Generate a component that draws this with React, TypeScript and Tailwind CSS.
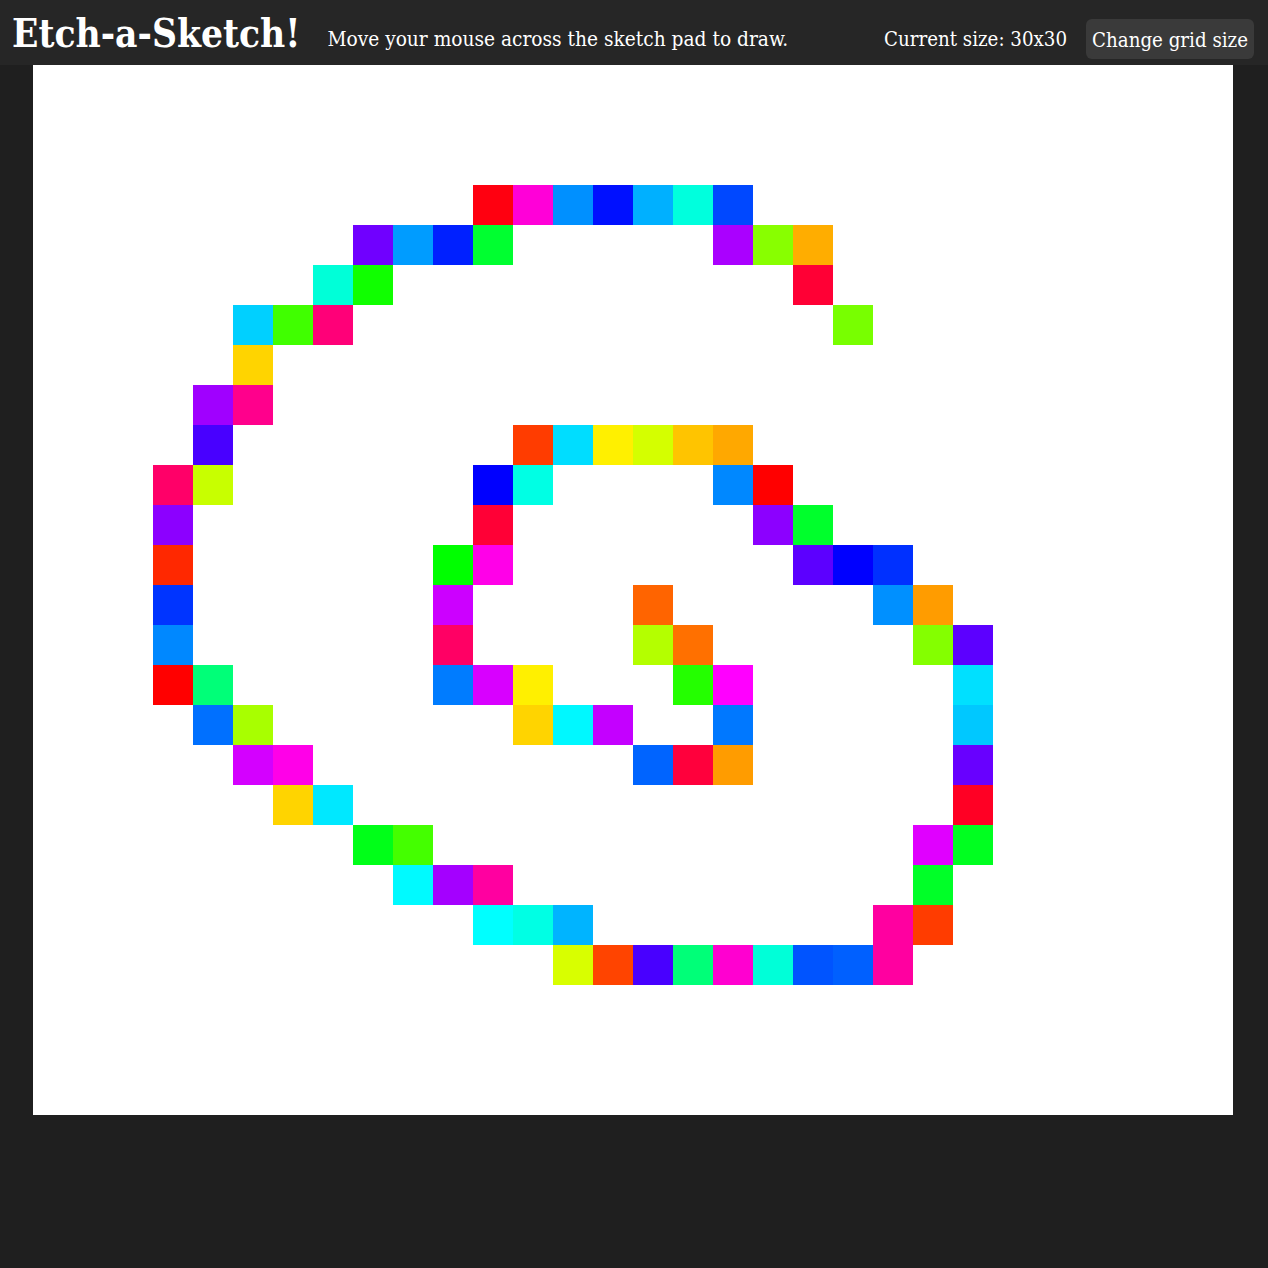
import React from "react";

// painted cells: row -> list of [col, colour]
const painted: Record<number, [number, string][]> = {
  3: [[11, "#ff0010"], [12, "#ff00d8"], [13, "#0090ff"], [14, "#0010ff"], [15, "#00b0ff"], [16, "#00ffdd"], [17, "#0048ff"]],
  4: [[8, "#7000ff"], [9, "#009cff"], [10, "#0020ff"], [11, "#00ff30"], [17, "#aa00ff"], [18, "#88ff00"], [19, "#ffad00"]],
  5: [[7, "#00ffd8"], [8, "#10ff00"], [19, "#ff0035"]],
  6: [[5, "#00d0ff"], [6, "#40ff00"], [7, "#ff0078"], [20, "#78ff00"]],
  7: [[5, "#ffd400"]],
  8: [[4, "#a000ff"], [5, "#ff008c"]],
  9: [[4, "#4800ff"], [12, "#ff3c00"], [13, "#00ddff"], [14, "#fff000"], [15, "#d4ff00"], [16, "#ffc400"], [17, "#ffa800"]],
  10: [[3, "#ff0068"], [4, "#c8ff00"], [11, "#0000ff"], [12, "#00ffe4"], [17, "#0088ff"], [18, "#ff0000"]],
  11: [[3, "#8c00ff"], [11, "#ff0036"], [18, "#8c00ff"], [19, "#00ff2c"]],
  12: [[3, "#ff2800"], [10, "#00ff00"], [11, "#ff00e8"], [19, "#5c00ff"], [20, "#0000ff"], [21, "#0030ff"]],
  13: [[3, "#0034ff"], [10, "#cc00ff"], [15, "#ff6400"], [21, "#0090ff"], [22, "#ff9c00"]],
  14: [[3, "#0088ff"], [10, "#ff0064"], [15, "#b4ff00"], [16, "#ff7000"], [22, "#84ff00"], [23, "#5c00ff"]],
  15: [[3, "#ff0000"], [4, "#00ff78"], [10, "#007cff"], [11, "#d800ff"], [12, "#fff000"], [16, "#24ff00"], [17, "#ff00ff"], [23, "#00e0ff"]],
  16: [[4, "#0070ff"], [5, "#a8ff00"], [12, "#ffd400"], [13, "#00f8ff"], [14, "#c400ff"], [17, "#0078ff"], [23, "#00c8ff"]],
  17: [[5, "#d400ff"], [6, "#ff00e8"], [15, "#0064ff"], [16, "#ff003c"], [17, "#ff9c00"], [23, "#6800ff"]],
  18: [[6, "#ffd400"], [7, "#00e8ff"], [23, "#ff0024"]],
  19: [[8, "#00ff18"], [9, "#44ff00"], [22, "#e000ff"], [23, "#00ff20"]],
  20: [[9, "#00faff"], [10, "#a400ff"], [11, "#ff00a0"], [22, "#00ff28"]],
  21: [[11, "#00ffff"], [12, "#00ffe4"], [13, "#00b4ff"], [21, "#ff00a0"], [22, "#ff3c00"]],
  22: [[13, "#d8ff00"], [14, "#ff4400"], [15, "#4800ff"], [16, "#00ff78"], [17, "#ff00d0"], [18, "#00ffd8"], [19, "#0054ff"], [20, "#0060ff"], [21, "#ff00a0"]],
};

const SIZE = 30;

function cellColor(row: number, col: number) {
  const hit = painted[row]?.find(([c]) => c === col);
  return hit ? hit[1] : undefined;
}

export default function App() {
  const cells = [];
  for (let r = 0; r < SIZE; r++) {
    for (let c = 0; c < SIZE; c++) {
      const color = cellColor(r, c);
      cells.push(
        <div
          key={`${r}-${c}`}
          className="h-10 w-10 bg-white"
          style={color ? { backgroundColor: color } : undefined}
        />
      );
    }
  }

  return (
    <div
      className="min-h-[1268px] bg-[#1f1f1f] font-stretch-condensed text-white"
      style={{ fontFamily: '"DejaVu Serif Condensed", "DejaVu Serif", "Liberation Serif", serif' }}
    >
      {/* header */}
      <header className="flex h-[65px] items-center justify-between bg-[#262626] pl-3 pr-[14px]">
        <div className="flex items-center">
          <h1 className="mt-[3px] text-[38.5px] font-bold leading-none">Etch-a-Sketch!</h1>
          <p className="ml-[27px] mt-[14px] text-[20.7px]">
            Move your mouse across the sketch pad to draw.
          </p>
        </div>
        <div className="mt-[12px] flex items-center">
          <span className="mt-[2px] text-[20.3px]">Current size: 30x30</span>
          <button className="ml-[19px] h-10 rounded-md bg-[#3a3a3a] px-[6px] pt-[3px] text-[20.3px] text-white">
            Change grid size
          </button>
        </div>
      </header>

      {/* sketch pad */}
      <main className="flex justify-center pl-[33px] pr-[35px]">
        <div className="h-[1050px] w-[1200px] overflow-hidden bg-white">
          <div className="grid grid-cols-[repeat(30,40px)]">{cells}</div>
        </div>
      </main>
    </div>
  );
}
